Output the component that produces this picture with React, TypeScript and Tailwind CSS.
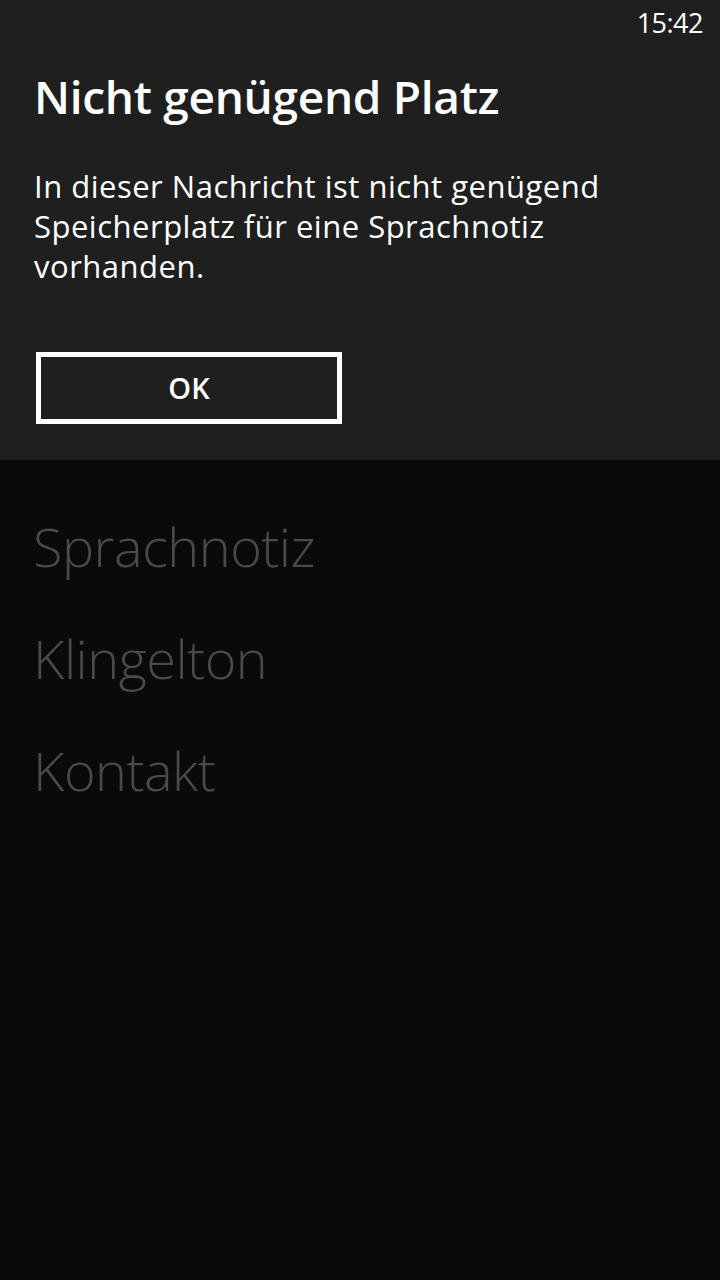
const ITEMS = ["Sprachnotiz", "Klingelton", "Kontakt"];

export default function App() {
  return (
    <main
      className="w-[720px] h-[1280px] bg-[#0a0a0a] flex flex-col"
      style={{ fontFamily: '"Open Sans", "Noto Sans", sans-serif' }}
    >
      <section className="h-[460px] bg-[#1f1f1f] flex flex-col px-[34px]">
        <div className="h-[46px] flex justify-end items-start pt-[5px] -mr-[17px]">
          <span className="text-white text-[27px] leading-[36px] tracking-[-0.5px]">15:42</span>
        </div>
        <h1 className="text-white text-[46px] font-semibold leading-[52px] mt-[24px] tracking-[-0.3px]">
          Nicht genügend Platz
        </h1>
        <p className="text-white text-[31px] leading-[40px] mt-[44px] tracking-[0.5px]">
          In dieser Nachricht ist nicht genügend
          <br />
          Speicherplatz für eine Sprachnotiz
          <br />
          vorhanden.
        </p>
        <button className="mt-[66px] ml-[2px] w-[306px] h-[72px] border-[5px] border-white text-white text-[29px] font-semibold flex items-center justify-center">
          OK
        </button>
      </section>
      <ul className="flex flex-col px-[33px] pt-[30px]">
        {ITEMS.map((item) => (
          <li
            key={item}
            className="text-[#4a4a4a] text-[54px] font-light leading-[112px] tracking-[-0.5px]"
          >
            {item}
          </li>
        ))}
      </ul>
    </main>
  );
}
